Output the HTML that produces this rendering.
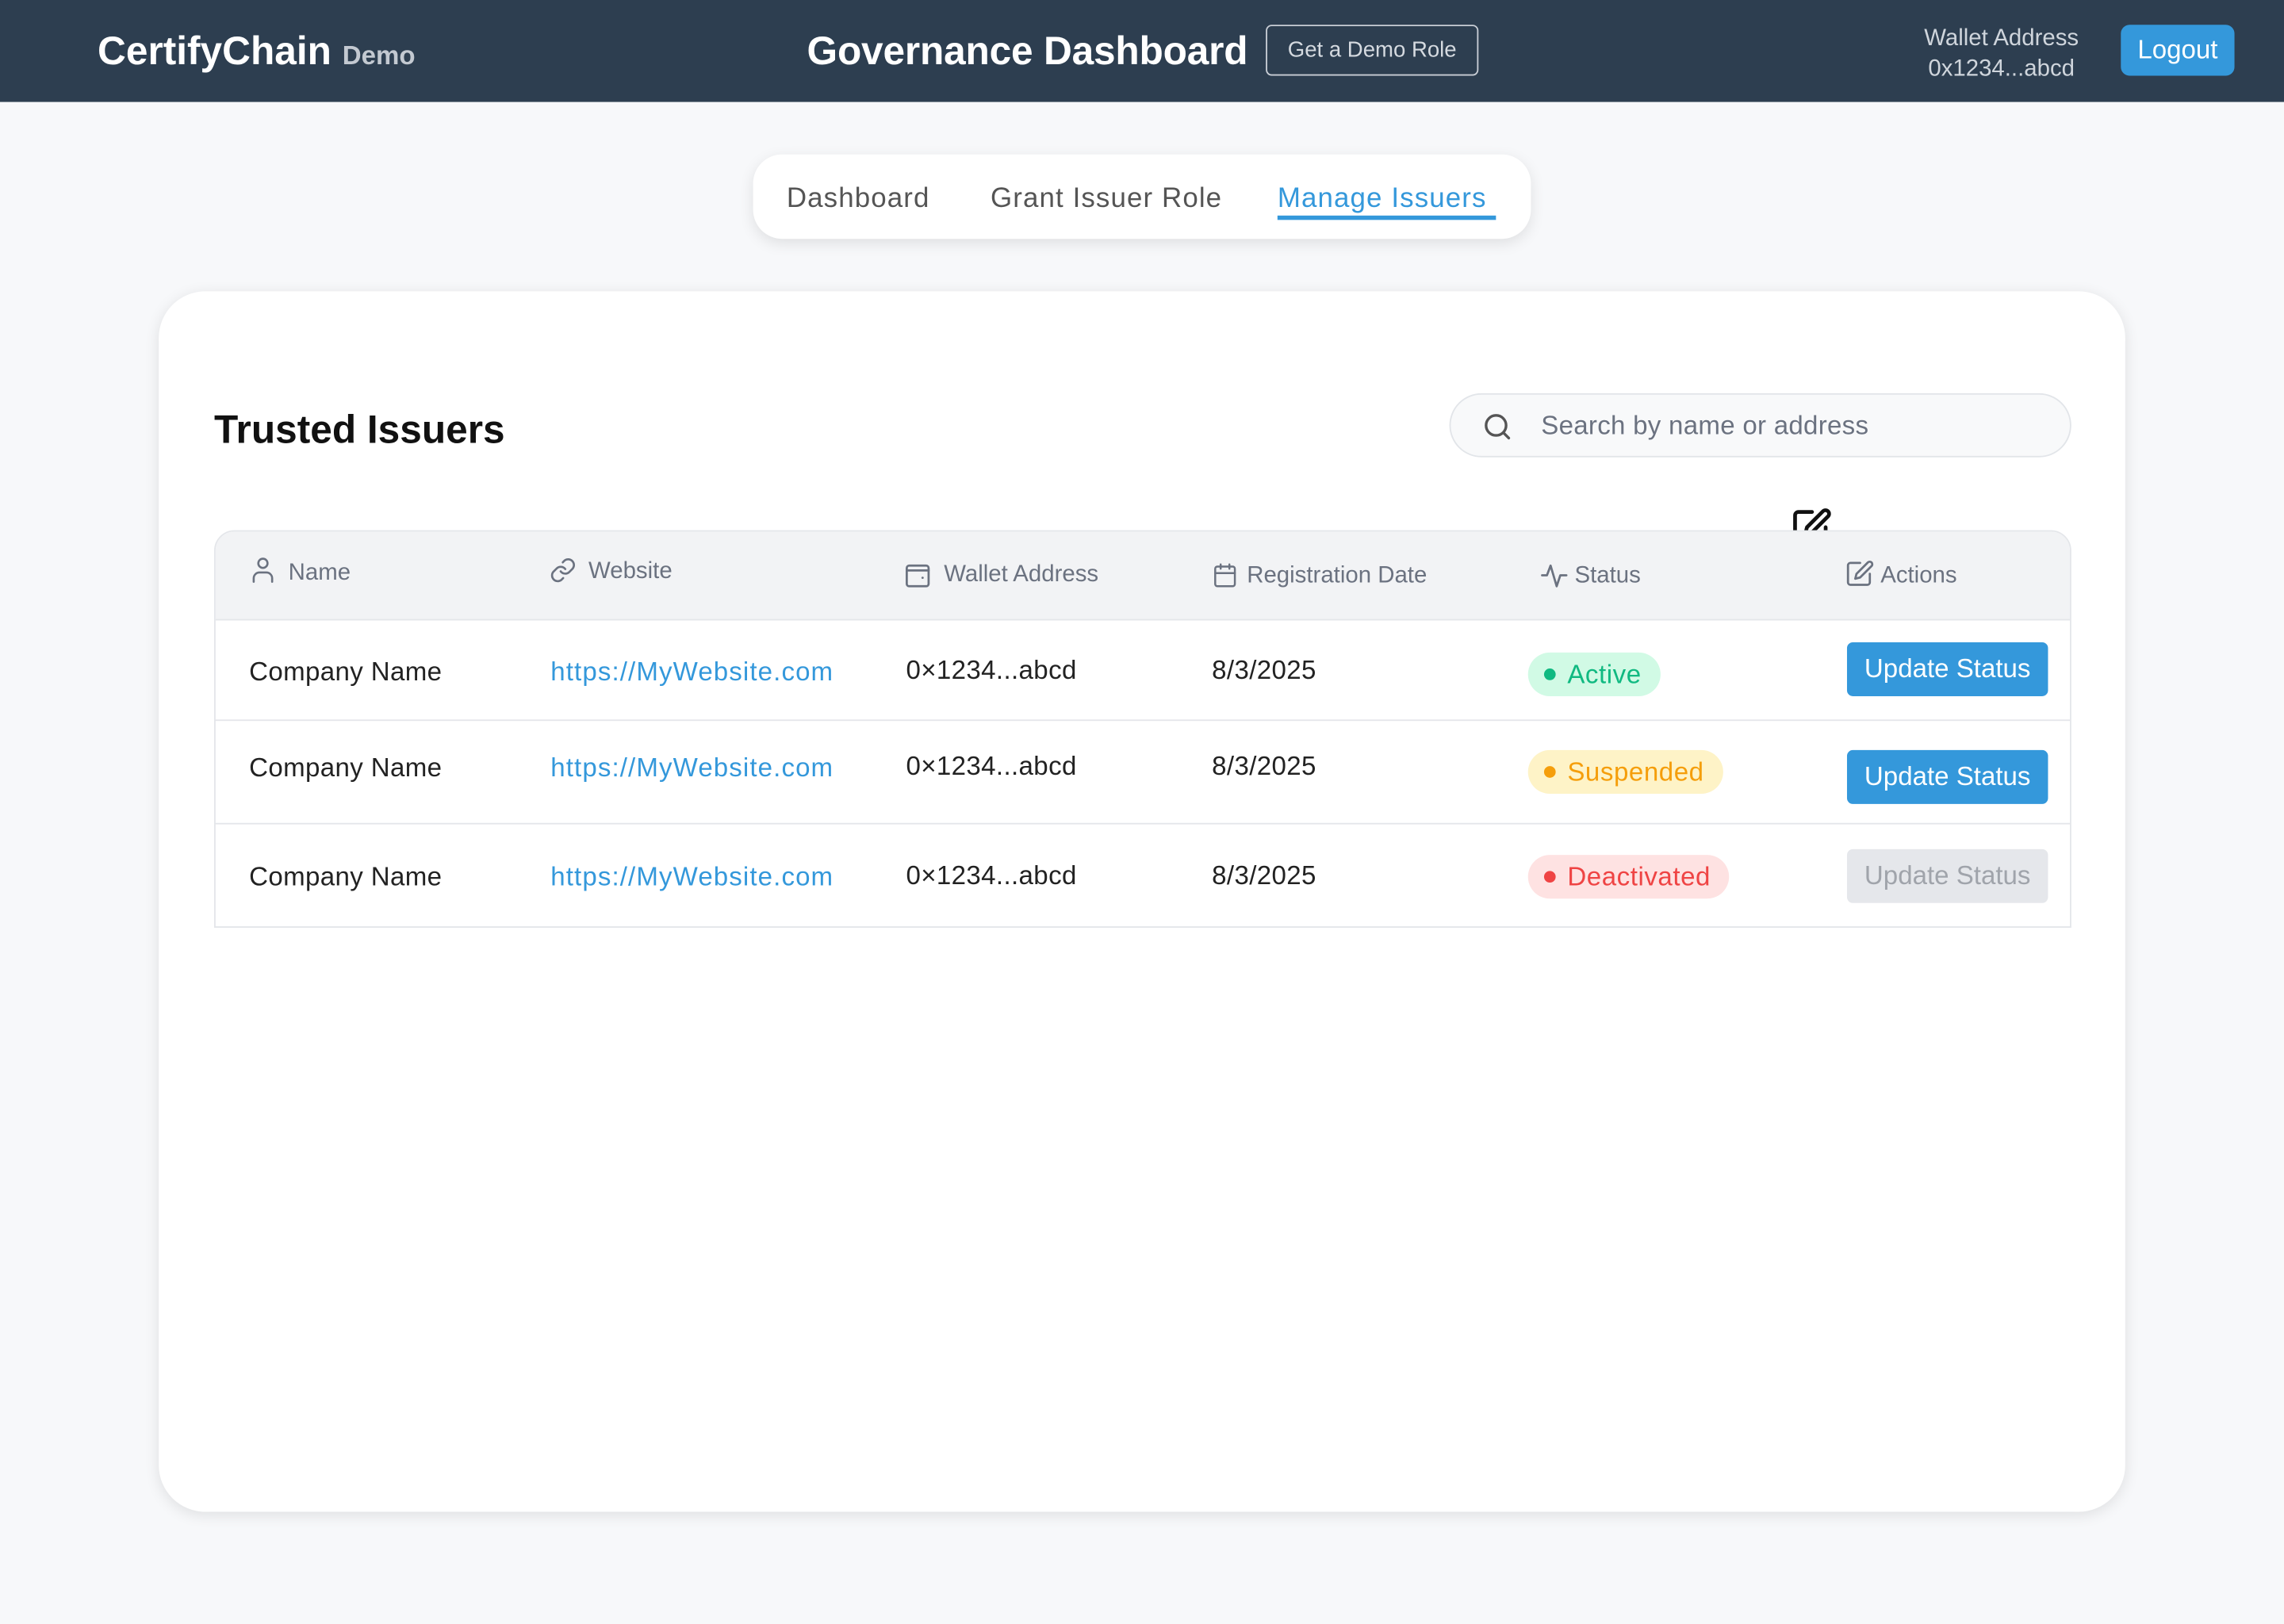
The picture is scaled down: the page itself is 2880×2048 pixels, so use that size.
<!DOCTYPE html>
<html><head><meta charset="utf-8"><style>
*{box-sizing:border-box;margin:0;padding:0}
html,body{width:2880px;height:2048px;overflow:hidden;background:#f7f8fa;font-family:"Liberation Sans",sans-serif}
#w{position:absolute;left:0;top:0;width:1568px;height:1115px;transform:scale(1.836735);transform-origin:0 0}
.a{position:absolute;white-space:nowrap}
.hdr{position:absolute;left:0;top:0;width:1568px;height:70px;background:#2d3e50}
.ic{position:absolute;fill:none;stroke:#6b7280;stroke-width:1.8;stroke-linecap:round;stroke-linejoin:round}
.th{font-size:16px;color:#6b7280;margin-top:1px}
.td{font-size:18px;color:#222;margin-top:1px;letter-spacing:.2px}
.lk{font-size:18px;color:#3498db;margin-top:1px;letter-spacing:.6px}
.tab{font-size:19px;margin-top:2px;letter-spacing:.6px}
.bd{position:absolute;height:30px;border-radius:15px;font-size:18px;line-height:31px;padding-left:27px;padding-right:13px;letter-spacing:.3px}
.bd:before{content:"";position:absolute;left:11px;top:11px;width:8px;height:8px;border-radius:50%;background:currentColor}
.bt{position:absolute;left:1268px;width:138px;height:37px;border-radius:4px;background:#3498db;color:#fff;font-size:18px;line-height:37px;text-align:center}
.rl{position:absolute;left:147px;width:1274px;height:1px;background:#e4e6ea}
</style></head><body><div id="w">
<div class="hdr"></div>
<div class="a" style="left:67px;top:20px;font-size:27px;font-weight:bold;color:#fff">CertifyChain <span style="font-size:18px;color:#c3c9d1">Demo</span></div>
<div class="a" style="left:554px;top:20px;font-size:27px;font-weight:bold;color:#fff;letter-spacing:-.1px">Governance Dashboard</div>
<div class="a" style="left:869px;top:17px;width:146px;height:35px;border:1.5px solid #c9ced6;border-radius:4px;color:#d5dae0;font-size:15px;line-height:34px;text-align:center">Get a Demo Role</div>
<div class="a" style="left:1310px;top:16px;width:128px;text-align:center;color:#cfd5dc;font-size:16px;line-height:21px">Wallet Address<br>0x1234...abcd</div>
<div class="a" style="left:1456px;top:17px;width:78px;height:35px;background:#3498db;border-radius:6px;color:#fff;font-size:18px;line-height:35px;text-align:center">Logout</div>

<div class="a" style="left:517px;top:106px;width:534px;height:58px;background:#fff;border-radius:20px;box-shadow:0 3px 10px rgba(0,0,0,.1)"></div>
<div class="a tab" style="left:540px;top:124px;color:#555">Dashboard</div>
<div class="a tab" style="left:680px;top:124px;color:#555">Grant Issuer Role</div>
<div class="a tab" style="left:877px;top:124px;color:#3498db">Manage Issuers</div>
<div class="a" style="left:877px;top:148px;width:150px;height:3px;background:#3498db"></div>

<div class="a" style="left:109px;top:200px;width:1350px;height:838px;background:#fff;border-radius:32px;box-shadow:0 2px 10px rgba(0,0,0,.1)"></div>
<div class="a" style="left:147px;top:280px;font-size:27px;font-weight:bold;color:#111">Trusted Issuers</div>
<div class="a" style="left:995px;top:270px;width:427px;height:44px;background:#f8f9fa;border:1.5px solid #e2e5e9;border-radius:22px"></div>
<svg class="ic" style="left:1017px;top:282px;stroke:#555;stroke-width:2" width="22" height="22" viewBox="0 0 24 24"><circle cx="11" cy="11" r="7.5"/><path d="M16.5 16.5l4 4"/></svg>
<div class="a" style="left:1058px;top:282px;font-size:18px;color:#6b7280;letter-spacing:.15px">Search by name or address</div>
<svg class="ic" style="left:1230px;top:348px;stroke:#111;stroke-width:2.2" width="28" height="28" viewBox="0 0 24 24"><path d="M12 3H4a2 2 0 0 0-2 2v14a2 2 0 0 0 2 2h14a2 2 0 0 0 2-2v-7"/><path d="M18.4 2.6a2.1 2.1 0 0 1 3 3L12 15l-4 1 1-4z"/></svg>

<div class="a" style="left:147px;top:364px;width:1275px;height:273px;border:1px solid #e4e6ea;border-radius:14px 14px 0 0;overflow:hidden;background:#fff"><div style="height:61px;background:#f2f3f5;border-bottom:1px solid #e4e6ea"></div></div>
<svg class="ic" style="left:171px;top:382px" width="19" height="19" viewBox="0 0 24 24"><circle cx="12" cy="6" r="4"/><path d="M4 22v-3a5 5 0 0 1 5-5h6a5 5 0 0 1 5 5v3"/></svg>
<div class="a th" style="left:198px;top:384px">Name</div>
<svg class="ic" style="left:377px;top:382px" width="19" height="19" viewBox="0 0 24 24"><path d="M10 13a5 5 0 0 0 7.5.5l3-3a5 5 0 0 0-7-7l-1.7 1.7"/><path d="M14 11a5 5 0 0 0-7.5-.5l-3 3a5 5 0 0 0 7 7l1.7-1.7"/></svg>
<div class="a th" style="left:404px;top:383px">Website</div>
<svg class="ic" style="left:620px;top:385px" width="20" height="20" viewBox="0 0 24 24"><rect x="3" y="4" width="18" height="17" rx="2"/><path d="M3 8h18M16 14h.1"/></svg>
<div class="a th" style="left:648px;top:385px">Wallet Address</div>
<svg class="ic" style="left:832px;top:386px" width="18" height="18" viewBox="0 0 24 24"><rect x="3" y="4" width="18" height="18" rx="2"/><path d="M3 10h18M8 2v4M16 2v4"/></svg>
<div class="a th" style="left:856px;top:386px">Registration Date</div>
<svg class="ic" style="left:1057px;top:385px" width="20" height="20" viewBox="0 0 24 24"><path d="M2 12h4l3-8 5 17 3-9h5"/></svg>
<div class="a th" style="left:1081px;top:386px">Status</div>
<svg class="ic" style="left:1267px;top:384px" width="20" height="20" viewBox="0 0 24 24"><path d="M12 3H4a2 2 0 0 0-2 2v14a2 2 0 0 0 2 2h14a2 2 0 0 0 2-2v-7"/><path d="M18.4 2.6a2.1 2.1 0 0 1 3 3L12 15l-4 1 1-4z"/></svg>
<div class="a th" style="left:1291px;top:386px">Actions</div>

<div class="rl" style="top:494px"></div>
<div class="rl" style="top:565px"></div>

<div class="a td" style="left:171px;top:450px">Company Name</div>
<div class="a lk" style="left:378px;top:450px">https://MyWebsite.com</div>
<div class="a td" style="left:622px;top:449px">0×1234...abcd</div>
<div class="a td" style="left:832px;top:449px">8/3/2025</div>
<div class="bd" style="left:1049px;top:448px;background:#d1fae5;color:#10b981">Active</div>
<div class="bt" style="top:441px">Update Status</div>

<div class="a td" style="left:171px;top:516px">Company Name</div>
<div class="a lk" style="left:378px;top:516px">https://MyWebsite.com</div>
<div class="a td" style="left:622px;top:515px">0×1234...abcd</div>
<div class="a td" style="left:832px;top:515px">8/3/2025</div>
<div class="bd" style="left:1049px;top:515px;background:#fef3c7;color:#f59e0b">Suspended</div>
<div class="bt" style="top:515px">Update Status</div>

<div class="a td" style="left:171px;top:591px">Company Name</div>
<div class="a lk" style="left:378px;top:591px">https://MyWebsite.com</div>
<div class="a td" style="left:622px;top:590px">0×1234...abcd</div>
<div class="a td" style="left:832px;top:590px">8/3/2025</div>
<div class="bd" style="left:1049px;top:587px;background:#fee2e2;color:#ef4444">Deactivated</div>
<div class="bt" style="top:583px;background:#e5e7eb;color:#a0a4ab">Update Status</div>
</div></body></html>
